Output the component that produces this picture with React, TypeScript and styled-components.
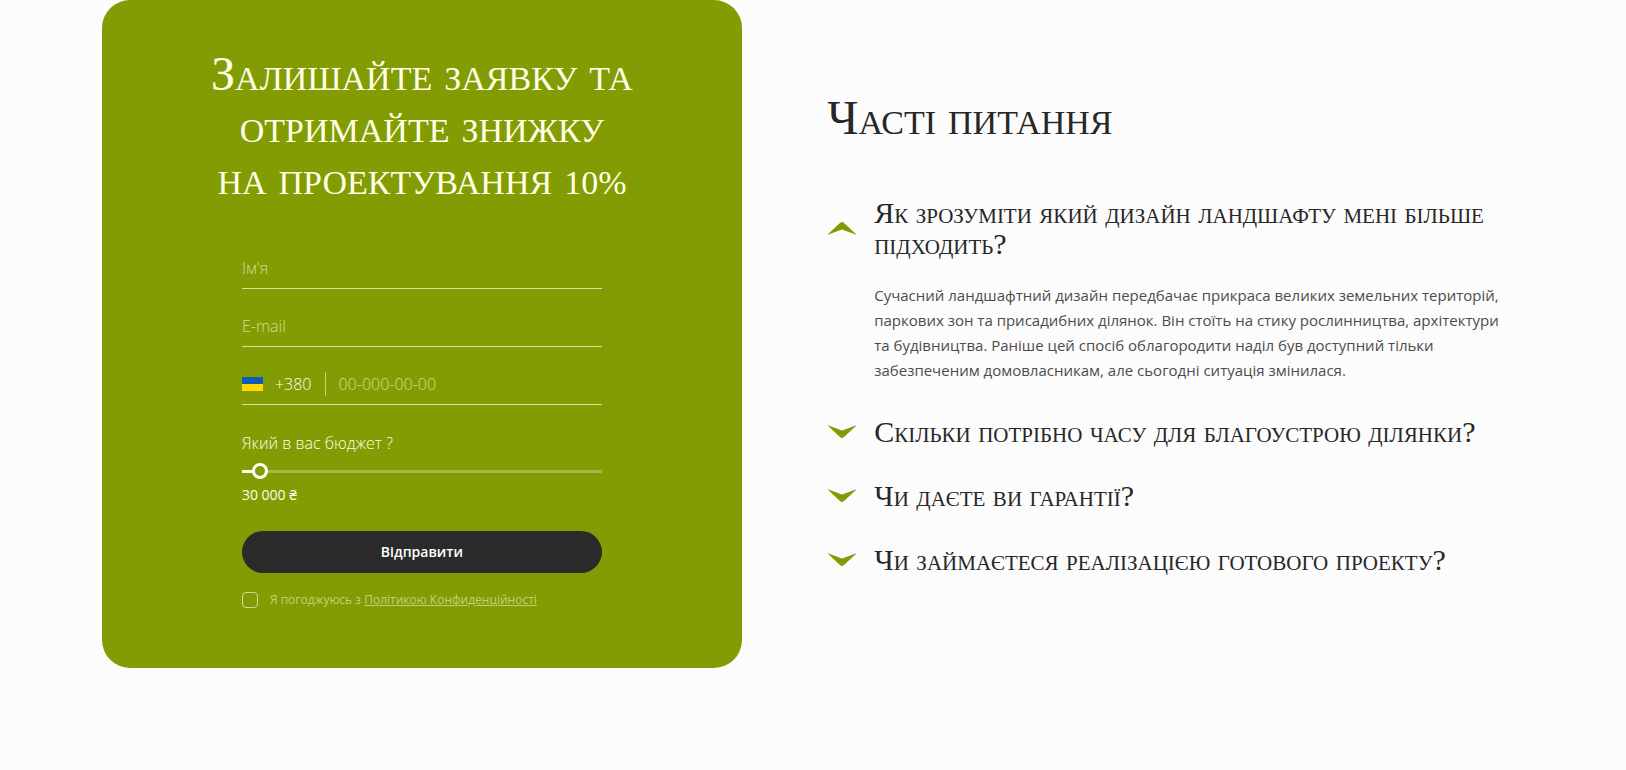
import React, { useId, useState } from "react";
import styled, { createGlobalStyle } from "styled-components";

const serif = '"Liberation Serif", "Times New Roman", serif';
const sans = '"Open Sans", "Noto Sans", sans-serif';
const green = "#839c03";
const ink = "#272727";

const GlobalStyle = createGlobalStyle`
  *, *::before, *::after { box-sizing: border-box; }
  body { margin: 0; background: #fcfcfc; color: ${ink}; font-family: ${sans}; }
  h1, h2, h3, p { margin: 0; font-weight: 400; }
`;

const Page = styled.main`
  display: grid;
  grid-template-columns: 45fr 49fr;
  column-gap: 6%;
  align-items: start;
  padding: 0 102px 100px;
`;

const Card = styled.section`
  display: flex;
  flex-direction: column;
  align-items: center;
  padding: 48px 24px 60px;
  border-radius: 28px;
  background: ${green};
  color: #ffffe6;
`;

const CardTitle = styled.h2`
  font: 400 48px/52px ${serif};
  font-variant: small-caps;
  text-align: center;
`;

const SmallFigures = styled.span`
  font-size: 34px;
  line-height: 1;
`;

const Form = styled.form`
  display: flex;
  flex-direction: column;
  width: 100%;
  max-width: 360px;
  margin-top: 27px;
`;

const Field = styled.label`
  display: flex;
  align-items: center;
  height: 58px;
  padding-top: 16px;
  border-bottom: 1px solid #d9e19f;
`;

const Input = styled.input`
  flex: 1;
  min-width: 0;
  padding: 0;
  border: 0;
  outline: 0;
  background: none;
  color: #ffffe6;
  font: 300 16px/24px ${sans};
  &::placeholder { color: #d2dc95; opacity: 1; }
`;

const Flag = styled.svg`
  width: 21px;
  height: 14px;
  margin-right: 12px;
`;

const Code = styled.span`
  padding-right: 14px;
  margin-right: 12px;
  border-right: 1px solid #c6d181;
  font: 300 16px/24px ${sans};
`;

const BudgetLabel = styled.label`
  margin-top: 26px;
  font: 300 16px/24px ${sans};
`;

const Range = styled.input<{ $fill: number }>`
  appearance: none;
  width: 100%;
  height: 16px;
  margin: 8px 0 6px;
  background: linear-gradient(to right, #ffffe6 ${(p) => p.$fill}%, #a5b64b ${(p) => p.$fill}%) center / 100% 3px no-repeat;
  cursor: pointer;
  &::-webkit-slider-thumb {
    appearance: none;
    width: 16px;
    height: 16px;
    border: 3px solid #fffff4;
    border-radius: 50%;
    background: ${green};
  }
`;

const Amount = styled.output`
  font: 400 14px/20px ${sans};
`;

const Submit = styled.button`
  height: 42px;
  margin-top: 26px;
  border: 0;
  border-radius: 21px;
  background: #2a2a2a;
  color: #fff;
  font: 600 14px/20px ${sans};
  cursor: pointer;
`;

const Consent = styled.div`
  display: flex;
  align-items: center;
  gap: 12px;
  margin-top: 19px;
  color: #c3ce78;
  font: 400 12px/16px ${sans};
  a { color: inherit; }
`;

const Tick = styled.input`
  appearance: none;
  width: 16px;
  height: 16px;
  margin: 0;
  border: 1px solid #d0da95;
  border-radius: 4px;
  &:checked { background: #ffffe6; }
`;

const Faq = styled.section`
  padding-top: 90px;
`;

const FaqTitle = styled.h2`
  font: 400 48px/56px ${serif};
  font-variant: small-caps;
`;

const FaqList = styled.div`
  display: flex;
  flex-direction: column;
  gap: 33px;
  margin-top: 51px;
`;

const Question = styled.button`
  display: grid;
  grid-template-columns: 30px 1fr;
  column-gap: 17px;
  align-items: center;
  width: 100%;
  padding: 0;
  border: 0;
  background: none;
  color: ${ink};
  font: 400 30px/31px ${serif};
  font-variant: small-caps;
  text-align: left;
  cursor: pointer;
`;

const Arrow = styled.svg<{ $open: boolean }>`
  width: 30px;
  height: 13px;
  transform: ${(p) => (p.$open ? "none" : "scaleY(-1)")};
`;

const Answer = styled.p`
  max-width: 687px;
  margin-top: 24px;
  padding-left: 47px;
  color: #4c4c4c;
  font: 400 15px/25px ${sans};
`;

const items = [
  {
    question: "Як зрозуміти який дизайн ландшафту мені більше підходить?",
    answer:
      "Сучасний ландшафтний дизайн передбачає прикраса великих земельних територій, паркових зон та присадибних ділянок. Він стоїть на стику рослинництва, архітектури та будівництва. Раніше цей спосіб облагородити наділ був доступний тільки забезпеченим домовласникам, але сьогодні ситуація змінилася.",
  },
  { question: "Скільки потрібно часу для благоустрою ділянки?" },
  { question: "Чи даєте ви гарантії?" },
  { question: "Чи займаєтеся реалізацією готового проекту?" },
];

export default function App() {
  const id = useId();
  const [budget, setBudget] = useState(30000);
  const [open, setOpen] = useState(0);
  const min = 20000;
  const max = 350000;
  const fill = ((budget - min) / (max - min)) * 100;

  return (
    <>
      <GlobalStyle />
      <Page>
        <Card>
          <CardTitle>
            Залишайте заявку та
            <br />
            отримайте знижку
            <br />
            на проектування <SmallFigures>10%</SmallFigures>
          </CardTitle>
          <Form onSubmit={(e) => e.preventDefault()}>
            <Field>
              <Input type="text" placeholder="Ім'я" aria-label="Ім'я" />
            </Field>
            <Field>
              <Input type="email" placeholder="E-mail" aria-label="E-mail" />
            </Field>
            <Field>
              <Flag viewBox="0 0 21 14" aria-hidden="true">
                <rect width="21" height="7" fill="#0a5cb8" />
                <rect y="7" width="21" height="7" fill="#ffd800" />
              </Flag>
              <Code>+380</Code>
              <Input type="tel" placeholder="00-000-00-00" />
            </Field>
            <BudgetLabel htmlFor={id + "budget"}>Який в вас бюджет ?</BudgetLabel>
            <Range
              id={id + "budget"}
              type="range"
              min={min}
              max={max}
              step={5000}
              value={budget}
              $fill={fill}
              onChange={(e) => setBudget(Number(e.target.value))}
            />
            <Amount htmlFor={id + "budget"}>{String(budget).replace(/(\d)(?=(\d{3})+$)/g, "$1 ")} ₴</Amount>
            <Submit type="submit">Відправити</Submit>
            <Consent>
              <Tick id={id + "consent"} type="checkbox" />
              <label htmlFor={id + "consent"}>
                Я погоджуюсь з <a href="#policy">Політикою Конфиденційності</a>
              </label>
            </Consent>
          </Form>
        </Card>
        <Faq>
          <FaqTitle>Часті питання</FaqTitle>
          <FaqList>
            {items.map((item, i) => (
              <div key={item.question}>
                <Question type="button" aria-expanded={open === i} onClick={() => setOpen(open === i ? -1 : i)}>
                  <Arrow $open={open === i} viewBox="0 0 30 13" aria-hidden="true">
                    <path d="M0 13 L13 1 Q15 -1 17 1 L30 13 L15 7.5Z" fill={green} />
                  </Arrow>
                  {item.question}
                </Question>
                {open === i && item.answer && <Answer>{item.answer}</Answer>}
              </div>
            ))}
          </FaqList>
        </Faq>
      </Page>
    </>
  );
}
